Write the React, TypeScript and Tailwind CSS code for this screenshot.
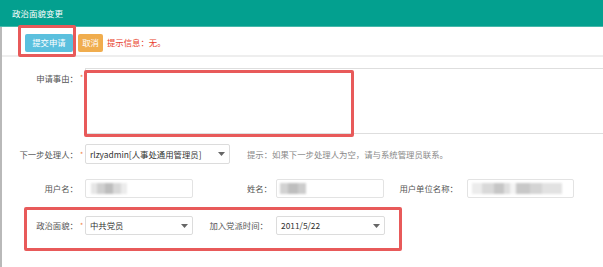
import React from "react";

const font = { fontFamily: '"Noto Sans CJK SC", "Noto Sans", sans-serif' };

function Caret() {
  return (
    <svg width="7" height="4" viewBox="0 0 7 4" className="shrink-0">
      <path d="M0 0 L7 0 L3.5 4 Z" fill="#666" />
    </svg>
  );
}

function Blur({ blocks }: { blocks: { w: number; c: string }[] }) {
  return (
    <div className="flex items-center h-full blur-[1.2px]">
      {blocks.map((b, i) => (
        <div key={i} className="h-[11px]" style={{ width: b.w, background: b.c }} />
      ))}
    </div>
  );
}

export default function App() {
  return (
    <div className="relative w-[603px] h-[267px] overflow-hidden bg-white text-[8.4px] leading-none text-[#555]" style={font}>
      {/* header */}
      <div className="h-[27px] bg-[#03a08f] border-b border-[#46b8aa] flex items-center pl-[12px] text-white text-[8.5px]">
        政治面貌变更
      </div>
      <div className="border-l-2 border-[#b9b9b9] h-[240px] flex flex-col">
        {/* toolbar */}
        <div className="h-[30px] border-b-2 border-[#eeeeee] flex items-center pl-[23px] pt-[3px]">
          <div className="w-[48px] h-[18px] rounded-[2px] bg-[#5bc0de] text-white flex items-center justify-center">提交申请</div>
          <div className="ml-[5px] w-[25px] h-[18px] rounded-[2px] bg-[#f0ad4e] text-white flex items-center justify-center">取消</div>
          <div className="ml-[4px] text-[#e8412c]">提示信息：无。</div>
        </div>
        {/* form */}
        <div className="flex flex-col pt-[11px]">
          <div className="flex">
            <div className="w-[76px] shrink-0 text-right pt-[6px] whitespace-nowrap">申请事由：</div>
            <div className="w-[7px] shrink-0 text-[#f08040] text-[7px] pt-[6px] pl-[2px]">*</div>
            <div className="w-[560px] h-[66px] border border-[#dedede] shrink-0" />
          </div>
          <div className="flex items-center mt-[10px] h-[20px]">
            <div className="w-[76px] shrink-0 text-right whitespace-nowrap">下一步处理人：</div>
            <div className="w-[7px] shrink-0 text-[#f08040] text-[7px] pl-[2px]">*</div>
            <div className="w-[145px] shrink-0 h-[20px] border border-[#dcdcdc] rounded-[2px] flex items-center justify-between px-[4px] text-[#333]">
              <span className="whitespace-nowrap">rlzyadmin[人事处通用管理员]</span>
              <Caret />
            </div>
            <div className="ml-[17px] text-[#888] whitespace-nowrap">提示：如果下一步处理人为空，请与系统管理员联系。</div>
          </div>
          <div className="flex items-center mt-[15px] h-[19px]">
            <div className="w-[76px] shrink-0 text-right">用户名：</div>
            <div className="w-[7px] shrink-0" />
            <div className="w-[108px] shrink-0 h-[19px] border border-[#e3e3e3] rounded-[2px] px-[5px] py-[3px]">
              <Blur blocks={[{ w: 6, c: "#e6e6e6" }, { w: 8, c: "#cfcfcf" }, { w: 8, c: "#bdbdbd" }, { w: 8, c: "#d8d8d8" }, { w: 6, c: "#ececec" }]} />
            </div>
            <div className="w-[83px] shrink-0 text-right pr-[4px]">姓名：</div>
            <div className="w-[108px] shrink-0 h-[19px] border border-[#e3e3e3] rounded-[2px] px-[3px] py-[3px]">
              <Blur blocks={[{ w: 8, c: "#d2d2d2" }, { w: 10, c: "#bebebe" }, { w: 8, c: "#cccccc" }]} />
            </div>
            <div className="w-[83px] shrink-0 text-right pr-[9px] whitespace-nowrap">用户单位名称：</div>
            <div className="w-[107px] shrink-0 h-[19px] border border-[#e3e3e3] rounded-[2px] px-[4px] py-[3px]">
              <Blur blocks={[{ w: 10, c: "#ececec" }, { w: 12, c: "#d9d9d9" }, { w: 10, c: "#c6c6c6" }, { w: 6, c: "#dedede" }, { w: 6, c: "#f4f4f4" }, { w: 14, c: "#c8c8c8" }, { w: 12, c: "#d4d4d4" }, { w: 20, c: "#e2e2e2" }]} />
            </div>
          </div>
          <div className="flex items-center mt-[18px] h-[19px]">
            <div className="w-[76px] shrink-0 text-right">政治面貌：</div>
            <div className="w-[7px] shrink-0 text-[#f08040] text-[7px] pl-[2px]">*</div>
            <div className="w-[108px] shrink-0 h-[19px] border border-[#dcdcdc] rounded-[2px] flex items-center justify-between px-[4px] text-[#333]">
              <span>中共党员</span>
              <Caret />
            </div>
            <div className="w-[83px] shrink-0 text-right pr-[8px] whitespace-nowrap">加入党派时间：</div>
            <div className="w-[109px] shrink-0 h-[19px] border border-[#dcdcdc] rounded-[2px] flex items-center justify-between px-[4px] text-[#333]">
              <span>2011/5/22</span>
              <Caret />
            </div>
          </div>
        </div>
      </div>
      {/* red annotation boxes */}
      <div className="absolute left-[18px] top-[25px] w-[58px] h-[32px] border-[3px] border-[#e85a5a] rounded-[2px]" />
      <div className="absolute left-[84px] top-[70px] w-[270px] h-[67px] border-[3px] border-[#e85a5a] rounded-[2px]" />
      <div className="absolute left-[24px] top-[207px] w-[378px] h-[44px] border-[3px] border-[#e85a5a] rounded-[2px]" />
    </div>
  );
}
